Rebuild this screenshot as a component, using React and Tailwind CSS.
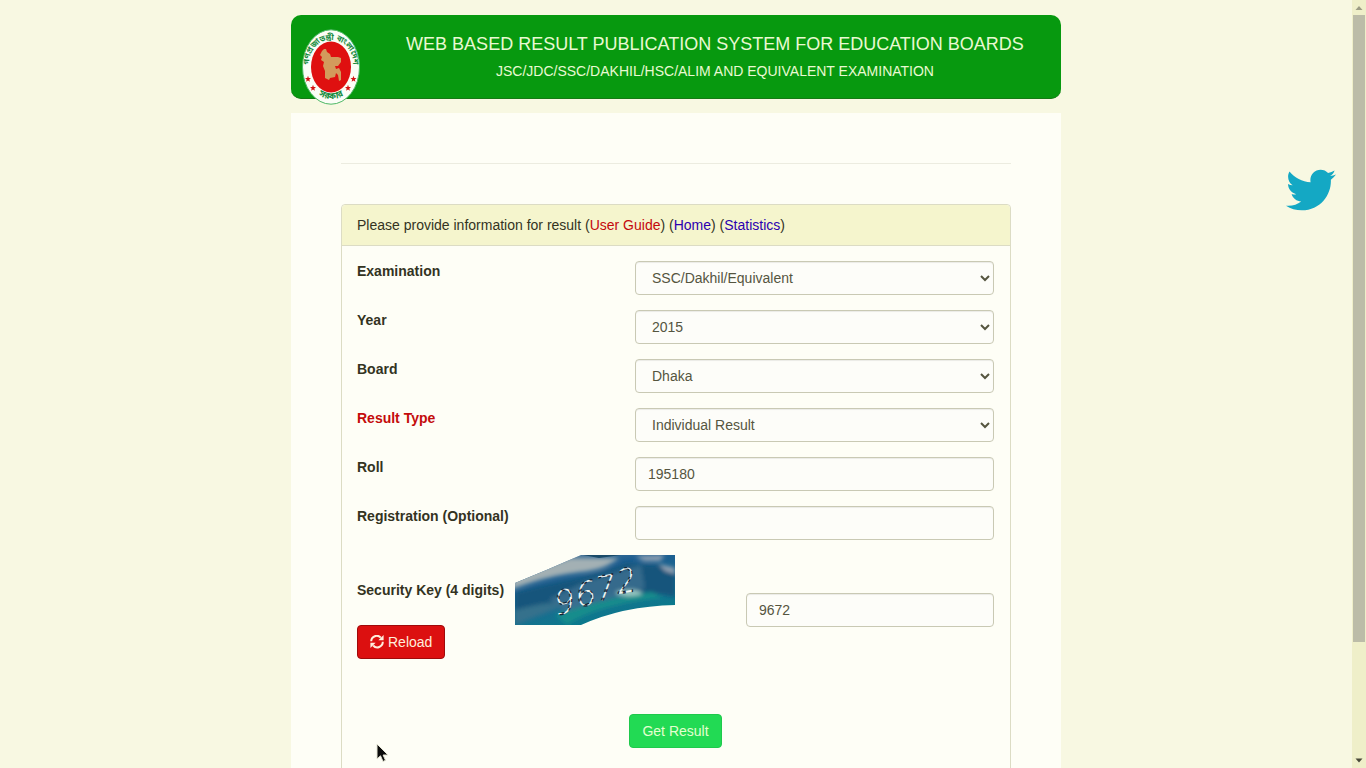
import React from "react";
import { FaTwitter } from "react-icons/fa";

const control =
  "h-[34px] w-full rounded border border-[#c9c9b4] bg-[#fdfdf9] px-3 text-sm text-[#55553f] shadow-[inset_0_1px_1px_rgba(0,0,0,0.075)]";

const fields = [
  { id: "exam", label: "Examination", value: "SSC/Dakhil/Equivalent", options: ["SSC/Dakhil/Equivalent", "HSC/Alim/Equivalent", "JSC/JDC"] },
  { id: "year", label: "Year", value: "2015", options: ["2015", "2014", "2013"] },
  { id: "board", label: "Board", value: "Dhaka", options: ["Dhaka", "Chittagong", "Rajshahi"] },
  { id: "type", label: "Result Type", value: "Individual Result", options: ["Individual Result", "Institution Result"], red: true },
  { id: "roll", label: "Roll", value: "195180" },
  { id: "reg", label: "Registration (Optional)", value: "" },
];

function Star({ x, y }) {
  return (
    <path
      transform={`translate(${x} ${y})`}
      d="M0-3.2.8-1 3-1 1.3.5 1.9 2.8 0 1.4-1.9 2.8-1.3.5-3-1-.8-1Z"
      fill="#d31212"
    />
  );
}

function Seal() {
  return (
    <svg viewBox="0 0 58 76" className="absolute top-[14px] left-[11px] h-[76px] w-[58px]" role="img" aria-label="Government seal">
      <ellipse cx="29" cy="38" rx="28.5" ry="37.2" fill="#fbfdf6" stroke="#4db866" strokeWidth="1" />
      <ellipse cx="29" cy="38" rx="20" ry="25.5" fill="#df1010" />
      <defs>
        <path id="ring-top" d="M8.500 44 C3 26 14 11 29 11 C44 11 55 26 49.500 44" />
        <path id="ring-bottom" d="M12 63 Q29 77 46 63" />
      </defs>
      <g fill="#158a3d" fontSize="8" fontWeight="bold" fontFamily="'Noto Sans Bengali','Noto Sans',sans-serif" textAnchor="middle">
        <text><textPath href="#ring-top" startOffset="50%">গণপ্রজাতন্ত্রী বাংলাদেশ</textPath></text>
        <text fontSize="9"><textPath href="#ring-bottom" startOffset="50%">সরকার</textPath></text>
      </g>
      <path
        d="M20 22 22 20 24 20 25 23 28 25 29 28 36 28 39 29 39 33 36 37 33 37 34 40 37 39 39 43 39 51 37 52 36 46 34 44 33 48 28 49 27 51 23 49 23 42 21 37 22 33 19 31 20 28 18 26Z"
        fill="#d39a5c"
      />
      <Star x={6} y={50} />
      <Star x={11} y={59} />
      <Star x={46} y={59} />
      <Star x={51.500} y={50} />
    </svg>
  );
}

function Captcha() {
  return (
    <svg viewBox="0 0 160 70" className="h-[70px] w-[160px] shrink-0 overflow-visible" role="img" aria-label="Security key 9672">
      <defs>
        <linearGradient id="sea" x1="0" y1="0" x2="0.5" y2="1">
          <stop offset="0" stopColor="#607f9d" />
          <stop offset="0.35" stopColor="#1c5d90" />
          <stop offset="0.7" stopColor="#1b6c90" />
          <stop offset="1" stopColor="#087b8c" />
        </linearGradient>
        <filter id="soft" x="-20%" y="-50%" width="140%" height="200%"><feGaussianBlur stdDeviation="2" /></filter>
        <clipPath id="wave"><path d="M0 28 Q32 15 66 0H160V50Q108 51 66 70H0Z" /></clipPath>
      </defs>
      <g clipPath="url(#wave)">
        <rect width="160" height="70" fill="url(#sea)" />
        <g filter="url(#soft)">
          <path d="M-5 35C25 24 42 20 67 17S96 8 104 3H55L0 22Z" fill="#a3b0b4" />
          <path d="M0 38C45 25 75 24 112 8L160 12V42C105 28 50 46 0 66Z" fill="#12557c" />
          <path d="M70 27 126 10 130 33 50 57 34 44Z" fill="#3e6f90" opacity=".8" />
          <path d="M40 60C74 49 100 42 137 37L148 43C102 47 70 58 52 70Z" fill="#178d8c" />
          <path d="M0 55C35 45 44 48 50 50L0 70Z" fill="#35718c" />
          <path d="M120 1 150 0 145 6 129 6ZM144 9 160 13V19L150 16Z" fill="#93a2b2" />
          <ellipse cx="114" cy="38" rx="13" ry="3" fill="#9ccbc5" />
        </g>
        <path d="M68 0H106L84 3Z" fill="#194a68" />
      </g>
      <g fontFamily="'Open Sans','Liberation Sans',sans-serif" fontWeight="300" fontStyle="italic" fontSize="34">
        {["9", "6", "7", "2"].map((d, i) => (
          <text
            key={d}
            transform={`translate(${[42, 63, 83, 103][i]} ${[60, 52, 46, 39][i]}) rotate(-10)`}
            fill="#f2f6f2"
            stroke="#142434"
            strokeWidth="1.2"
            strokeDasharray="3 6"
          >
            {d}
          </text>
        ))}
      </g>
    </svg>
  );
}

function RefreshIcon() {
  return (
    <svg viewBox="0 0 14 14" className="h-[14px] w-[14px]" aria-hidden="true">
      <path d="M1.200 6.200A5.500 5.500 0 0 1 10.800 2.700M12.800 6.800A5.500 5.500 0 0 1 3.200 10.500" fill="none" stroke="currentColor" strokeWidth="2" />
      <path d="M13.600 0V5.200H8.400ZM.4 13V7.800H5.600Z" fill="currentColor" />
    </svg>
  );
}

function Field({ field }) {
  return (
    <div className="grid grid-cols-[278fr_359fr]">
      <label htmlFor={field.id} className={`self-start font-bold ${field.red ? "text-[#c40c0c]" : "text-[#33331f]"}`}>
        {field.label}
      </label>
      {field.options ? (
        <select id={field.id} defaultValue={field.value} className={control}>
          {field.options.map((o) => <option key={o}>{o}</option>)}
        </select>
      ) : (
        <input id={field.id} type="text" defaultValue={field.value} className={control} />
      )}
    </div>
  );
}

export default function App() {
  return (
    <div className="relative flex h-screen overflow-hidden bg-[#f8f8e2] font-['Liberation_Sans',Arial,sans-serif] text-sm leading-5 text-[#33331f]">
      <div className="min-w-0 flex-1 overflow-hidden pt-[15px]">
        <div className="mx-auto max-w-[770px]">
          <header className="relative rounded-[10px] border-b border-[#147a14] bg-[#07990f] pt-[17px] pb-[17px] pl-[78px] text-center text-[#e9f9d2]">
            <Seal />
            <h1 className="text-lg leading-6">WEB BASED RESULT PUBLICATION SYSTEM FOR EDUCATION BOARDS</h1>
            <p className="pt-[5px]">JSC/JDC/SSC/DAKHIL/HSC/ALIM AND EQUIVALENT EXAMINATION</p>
          </header>

          <main className="mt-[14px] min-h-[900px] bg-[#fefef6] px-[50px] pt-[50px]">
            <hr className="border-[#ecece0]" />
            <section className="mt-10 min-h-[700px] rounded border border-[#dcdcc4]">
              <div className="rounded-t border-b border-[#dcdcc4] bg-[#f5f5cd] px-[15px] py-[10px]">
                Please provide information for result (
                <a href="#guide" className="text-[#c4080c]">User Guide</a>) (
                <a href="#home" className="text-[#2b00b0]">Home</a>) (
                <a href="#statistics" className="text-[#2b00b0]">Statistics</a>)
              </div>
              <form className="flex flex-col gap-[15px] py-[15px] pr-4 pl-[15px]" onSubmit={(e) => e.preventDefault()}>
                {fields.map((f) => <Field key={f.id} field={f} />)}
                <div className="flex justify-between">
                  <div>
                    <div className="flex items-center gap-[11px]">
                      <label htmlFor="key" className="font-bold">Security Key (4 digits)</label>
                      <Captcha />
                    </div>
                    <button type="button" className="flex h-[34px] items-center gap-1 rounded border border-[#a00a0a] bg-[#dc1010] px-3 text-[#ffeedd]">
                      <RefreshIcon />
                      Reload
                    </button>
                  </div>
                  <div className="w-[248px] pt-[38px]">
                    <input id="key" type="text" defaultValue="9672" className={control} />
                  </div>
                </div>
                <div className="flex justify-center pt-10">
                  <button type="submit" className="h-[34px] rounded border border-[#1fc94c] bg-[#22da54] px-3 text-[#e4ffd0]">
                    Get Result
                  </button>
                </div>
              </form>
            </section>
          </main>
        </div>
      </div>

      <a href="#twitter" aria-label="Twitter" className="absolute top-[165px] right-[30px] text-[#14a8c4]">
        <FaTwitter size={50} />
      </a>

      <div className="flex w-[14px] flex-col items-center bg-[#efefc9]" aria-hidden="true">
        <svg viewBox="0 0 14 15" className="h-[15px] w-[14px]"><path d="M3.500 10 7 6 10.500 10Z" fill="#9c9c84" /></svg>
        <div className="flex min-h-0 w-full flex-1 justify-center">
          <div className="h-[85%] w-3 bg-[#bcbca8]" />
        </div>
        <svg viewBox="0 0 14 15" className="h-[15px] w-[14px]"><path d="M3.500 5.500 7 9.500 10.500 5.500Z" fill="#484838" /></svg>
      </div>

      <svg viewBox="0 0 14 20" className="pointer-events-none absolute top-[743px] left-[376px] h-5 w-[14px]" aria-hidden="true">
        <path d="M1 1V16L4.500 12.800 7 18.500 9.500 17.300 7.100 12H12Z" fill="#0b0b0b" stroke="#e4e4d4" strokeWidth="1" />
      </svg>
    </div>
  );
}
